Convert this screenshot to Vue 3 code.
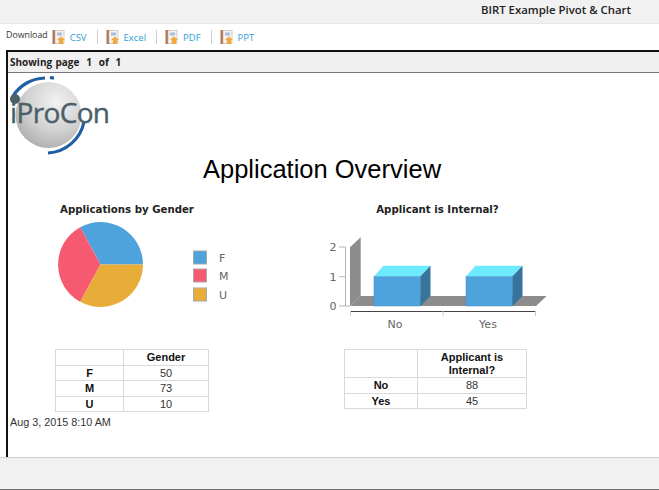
<script setup>
const downloads = ["CSV", "Excel", "PDF", "PPT"]
const genderRows = [
  ["F", 50],
  ["M", 73],
  ["U", 10],
]
const internalRows = [
  ["No", 88],
  ["Yes", 45],
]
const legend = [
  { label: "F", color: "#4fa3dc", y: 251 },
  { label: "M", color: "#f65a70", y: 269 },
  { label: "U", color: "#e8ac38", y: 288 },
]
const bars = [374, 466]
</script>

<template>
  <div class="app">
    <header class="topbar">BIRT Example Pivot &amp; Chart</header>

    <div class="toolbar">
      <span class="download">Download</span>
      <template v-for="(item, i) in downloads" :key="item">
        <span v-if="i > 0" class="sep"></span>
        <a class="link">
          <svg width="14" height="16" viewBox="0 0 14 16">
            <rect x="0.5" y="1" width="3" height="14" fill="#b5764e" />
            <rect x="3" y="1.5" width="9" height="13" fill="#f4f1ee" stroke="#b9b3ad" stroke-width="0.6" />
            <rect x="5" y="3.5" width="5" height="3" fill="#a3bfdc" />
            <path d="M9 7.5 L13 11 H11.2 V15 H6.8 V11 H5 Z" fill="#f2a83a" />
          </svg>
          <span>{{ item }}</span>
        </a>
      </template>
    </div>

    <div class="frame">
      <div class="pagebar">Showing page&nbsp;&nbsp;1&nbsp;&nbsp;of&nbsp;&nbsp;1</div>

      <main class="report">
        <svg class="logo" width="104" height="82" viewBox="0 0 104 82">
          <defs>
            <radialGradient id="ball" cx="0.62" cy="0.3" r="0.8">
              <stop offset="0" stop-color="#f2f2f2" />
              <stop offset="0.55" stop-color="#d2d2d2" />
              <stop offset="1" stop-color="#a8a8a8" />
            </radialGradient>
          </defs>
          <circle cx="38.5" cy="39" r="33" fill="url(#ball)" />
          <path d="M3 20 A39 39 0 0 1 35 2" fill="none" stroke="#1d5ea4" stroke-width="3.2" />
          <path d="M40 1.5 L44 2.2" fill="none" stroke="#1d5ea4" stroke-width="3.2" />
          <path d="M74 46 A39 39 0 0 1 38 77" fill="none" stroke="#1d5ea4" stroke-width="3.2" />
          <circle cx="5" cy="23" r="5" fill="#4a6068" />
          <text x="0" y="47" class="logo-text" textLength="100">iProCon</text>
        </svg>

        <h1 class="title">Application Overview</h1>

        <div class="columns">
          <section class="col">
            <svg class="chart" width="292" height="140" viewBox="8 200 292 140">
              <text x="127" y="213" text-anchor="middle" class="chart-title">Applications by Gender</text>
              <path d="M100.5 264.5 L143 264.5 A42.5 42.5 0 0 0 80.2 227.2 Z" fill="#4fa3dc" />
              <path d="M100.5 264.5 L80.2 227.2 A42.5 42.5 0 0 0 80.2 301.8 Z" fill="#f65a70" />
              <path d="M100.5 264.5 L80.2 301.8 A42.5 42.5 0 0 0 143 264.5 Z" fill="#e8ac38" />
              <g v-for="l in legend" :key="l.label">
                <rect x="193.5" :y="l.y" width="13" height="13" :fill="l.color" stroke="#a8a8a8" />
                <text x="219" :y="l.y + 11" class="axis">{{ l.label }}</text>
              </g>
            </svg>
            <table class="gender">
              <tbody>
                <tr>
                  <th class="head-left"></th>
                  <th>Gender</th>
                </tr>
                <tr v-for="row in genderRows" :key="row[0]">
                  <th>{{ row[0] }}</th>
                  <td>{{ row[1] }}</td>
                </tr>
              </tbody>
            </table>
          </section>

          <section class="col">
            <svg class="chart" width="300" height="140" viewBox="300 200 300 140">
              <text x="437.5" y="213" text-anchor="middle" class="chart-title">Applicant is Internal?</text>
              <path d="M350 247.3 L360.7 237.3 V296 L350 306 Z" fill="#8c8c8c" />
              <path d="M350 306 L360.7 296 H546.7 L536 306 Z" fill="#8c8c8c" />
              <g v-for="x in bars" :key="x">
                <rect :x="x" y="276.3" width="46.5" height="29.7" fill="#4fa3dc" stroke="#3f8dc2" stroke-width="0.5" />
                <path :d="`M${x} 276.3 l9.5 -10.6 h47 l-10 10.6 Z`" fill="#6eeaff" />
                <path :d="`M${x + 46.5} 276.3 l10 -10.6 V296 l-10 10 Z`" fill="#36749c" />
              </g>
              <path d="M345.5 247 V306 M339 247 H346 M339 276.7 H346 M339 306 H350" stroke="#b5b5b5" fill="none" />
              <path d="M350 311.5 H535" stroke="#444" fill="none" />
              <path d="M350.5 311 V316 M443 311 V316 M535.5 311 V316" stroke="#ccc" fill="none" />
              <text x="333" y="251" text-anchor="middle" class="axis">2</text>
              <text x="333" y="281" text-anchor="middle" class="axis">1</text>
              <text x="333" y="310" text-anchor="middle" class="axis">0</text>
              <text x="395" y="328" text-anchor="middle" class="axis">No</text>
              <text x="488" y="328" text-anchor="middle" class="axis">Yes</text>
            </svg>
            <table class="internal">
              <tbody>
                <tr>
                  <th class="head-left"></th>
                  <th>Applicant is<br />Internal?</th>
                </tr>
                <tr v-for="row in internalRows" :key="row[0]">
                  <th>{{ row[0] }}</th>
                  <td>{{ row[1] }}</td>
                </tr>
              </tbody>
            </table>
          </section>
        </div>

        <div class="stamp">Aug 3, 2015 8:10 AM</div>
      </main>
    </div>

    <footer class="footer"></footer>
  </div>
</template>

<style scoped>
.app {
  background: #fff;
  display: flex;
  flex-direction: column;
  height: 490px;
  overflow: hidden;
  width: 659px;
}

.topbar {
  background: #f1f1f1;
  border-bottom: 1px solid #e8e8e8;
  box-sizing: border-box;
  color: #222;
  font-family: "Open Sans", sans-serif;
  font-size: 11.4px;
  font-weight: 600;
  height: 24px;
  line-height: 20px;
  padding-right: 28px;
  text-align: right;
}

.toolbar {
  align-items: center;
  display: flex;
  font-family: "Open Sans", sans-serif;
  font-size: 9.5px;
  height: 26px;
  padding-left: 6px;
}

.download {
  color: #333;
  font-size: 8.8px;
  margin-right: 4px;
  position: relative;
  top: -2px;
}

.link {
  align-items: center;
  color: #2d9fd8;
  display: flex;
  gap: 4px;
}

.sep {
  background: #ccc;
  height: 14px;
  margin: 0 8px 0 10px;
  width: 1px;
}

.frame {
  border-left: 2px solid #111;
  border-top: 2px solid #111;
  display: flex;
  flex: 1;
  flex-direction: column;
  margin-left: 6px;
  min-height: 0;
}

.pagebar {
  background: #f0f0f0;
  border-bottom: 1px solid #777;
  color: #222;
  font-family: "Open Sans", sans-serif;
  font-size: 10px;
  font-weight: 700;
  height: 20px;
  line-height: 20px;
  padding-left: 2px;
  word-spacing: 0.8px;
}

.report {
  flex: 1;
}

.logo {
  display: block;
  margin: 3px 0 0 2px;
}

.logo-text {
  fill: #4a6068;
  font-family: "Open Sans", sans-serif;
  font-size: 28px;
  stroke: #4a6068;
  stroke-width: 0.4;
}

.title {
  color: #000;
  font-family: "Liberation Sans", Arial, sans-serif;
  font-size: 25.5px;
  font-weight: 400;
  height: 30px;
  line-height: 30px;
  margin: -4px 0 0;
  padding-right: 23px;
  text-align: center;
}

.columns {
  display: grid;
  grid-template-columns: 292px 300px;
  margin-top: 16px;
}

.chart {
  display: block;
}

.chart-title {
  fill: #222;
  font-family: "DejaVu Sans", sans-serif;
  font-size: 10.2px;
  font-weight: 600;
}

.axis {
  fill: #666;
  font-family: "DejaVu Sans", sans-serif;
  font-size: 11px;
}

table {
  border-collapse: collapse;
  color: #333;
  font-family: "Liberation Sans", Arial, sans-serif;
  font-size: 11px;
  line-height: 12.5px;
  table-layout: fixed;
  text-align: center;
}

th,
td {
  border: 1px solid #d9d9d9;
  font-weight: 400;
  padding: 1px 2px;
}

th {
  color: #111;
  font-weight: 700;
}

.gender {
  margin: 9px 0 0 47px;
  width: 154px;
}

.gender .head-left {
  width: 63px;
}

.internal {
  margin: 9px 0 0 44px;
  width: 183px;
}

.internal .head-left {
  width: 68px;
}

.stamp {
  color: #333;
  font-family: "Liberation Sans", Arial, sans-serif;
  font-size: 10.8px;
  line-height: 14px;
  margin: 3px 0 0 2px;
}

.footer {
  background: #f1f1f1;
  border-bottom: 1px solid #777;
  border-top: 1px solid #d0d0d0;
  box-sizing: border-box;
  height: 33px;
}
</style>
